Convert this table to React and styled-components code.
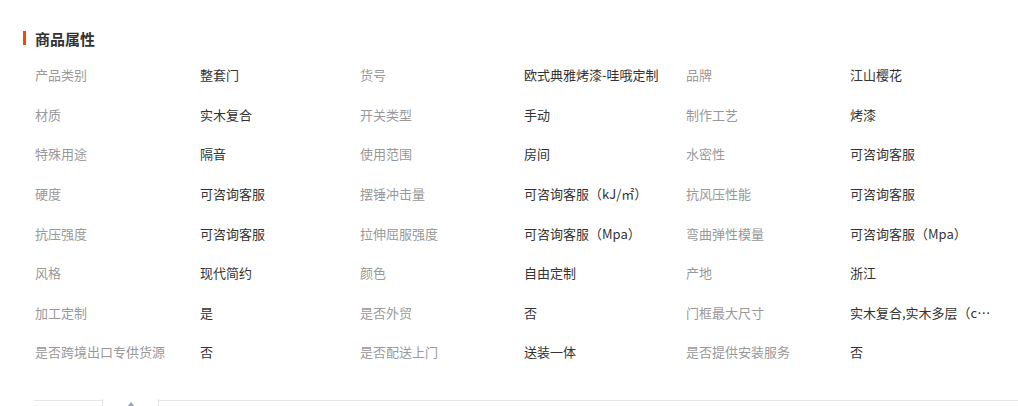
import React from 'react';
import styled, { createGlobalStyle } from 'styled-components';

const GlobalStyle = createGlobalStyle`
  body {
    margin: 0;
    background: #fff;
    font-family: "Noto Sans CJK SC", "Liberation Sans", sans-serif;
  }
`;

const Section = styled.div`
  padding: 28px 0 0 23px;
  overflow: hidden;
  height: 406px;
  box-sizing: border-box;
`;

const Title = styled.h3`
  display: flex;
  align-items: center;
  height: 20px;
  margin: 0;
  font-size: 15px;
  font-weight: 700;
  color: #333;

  &::before {
    content: '';
    width: 3px;
    height: 14px;
    margin-right: 9px;
    background-color: #ff4400;
  }
`;

const AttrGrid = styled.div`
  display: grid;
  grid-template-columns: 165px 160px 164px 162px 164px 1fr;
  grid-auto-rows: 39.6px;
  margin-top: 7px;
  padding-left: 12px;
  font-size: 13px;
`;

const Label = styled.div`
  display: flex;
  align-items: center;
  color: #999;
  white-space: nowrap;
`;

const Value = styled.div`
  align-self: center;
  max-width: 144px;
  color: #333;
  white-space: nowrap;
  overflow: hidden;
  text-overflow: ellipsis;
`;

const TabStrip = styled.div`
  display: flex;
  height: 10px;
  margin-top: 28px;
  padding-left: 11px;
`;

const Line = styled.div`
  border-top: 1px solid #e5e5e5;
  ${({ $grow }) => ($grow ? 'flex: 1;' : 'width: 68px;')}
`;

const Tab = styled.div`
  display: flex;
  justify-content: center;
  width: 55px;
  border-left: 1px solid #e5e5e5;
  border-right: 1px solid #e5e5e5;
  padding-top: 3px;
  margin-top: -1px;
`;

const attrs = [
  ['产品类别', '整套门'],
  ['货号', '欧式典雅烤漆-哇哦定制'],
  ['品牌', '江山樱花'],
  ['材质', '实木复合'],
  ['开关类型', '手动'],
  ['制作工艺', '烤漆'],
  ['特殊用途', '隔音'],
  ['使用范围', '房间'],
  ['水密性', '可咨询客服'],
  ['硬度', '可咨询客服'],
  ['摆锤冲击量', '可咨询客服（kJ/㎡）'],
  ['抗风压性能', '可咨询客服'],
  ['抗压强度', '可咨询客服'],
  ['拉伸屈服强度', '可咨询客服（Mpa）'],
  ['弯曲弹性模量', '可咨询客服（Mpa）'],
  ['风格', '现代简约'],
  ['颜色', '自由定制'],
  ['产地', '浙江'],
  ['加工定制', '是'],
  ['是否外贸', '否'],
  ['门框最大尺寸', '实木复合,实木多层（cm）'],
  ['是否跨境出口专供货源', '否'],
  ['是否配送上门', '送装一体'],
  ['是否提供安装服务', '否'],
];

const App = () => (
  <>
    <GlobalStyle />
    <Section>
      <Title>商品属性</Title>
      <AttrGrid>
        {attrs.map(([label, value], index) => (
          <React.Fragment key={index}>
            <Label>{label}</Label>
            <Value title={value}>{value}</Value>
          </React.Fragment>
        ))}
      </AttrGrid>
      <TabStrip>
        <Line />
        <Tab>
          <svg width="8" height="5" viewBox="0 0 8 5">
            <path d="M4 0 L8 5 L0 5 Z" fill="#9aa4b8" />
          </svg>
        </Tab>
        <Line $grow />
      </TabStrip>
    </Section>
  </>
);

export default App;
